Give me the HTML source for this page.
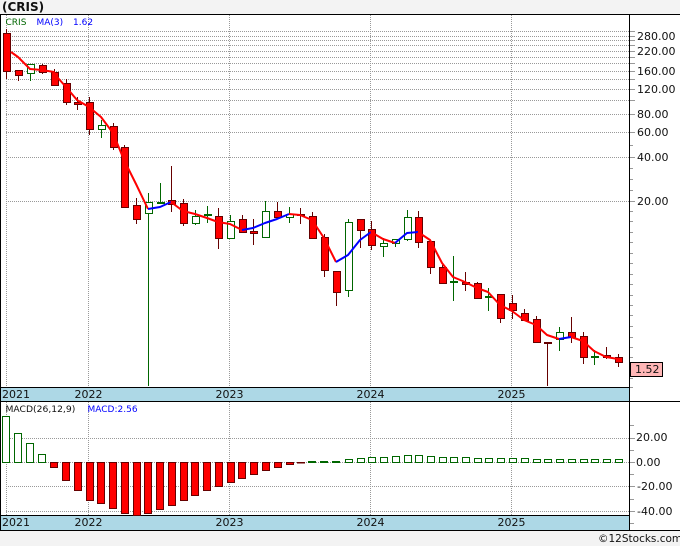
<!DOCTYPE html>
<html><head><meta charset="utf-8"><style>
html,body{margin:0;padding:0;background:#f3f3f3;width:680px;height:546px;overflow:hidden}
svg{display:block}
text{font-family:"DejaVu Sans",sans-serif;font-size:11px;fill:#111}
</style></head><body>
<svg width="680" height="546" viewBox="0 0 680 546" xmlns="http://www.w3.org/2000/svg" shape-rendering="crispEdges">
<rect width="680" height="546" fill="#f3f3f3"/>
<rect x="0" y="14" width="680" height="517" fill="#fff"/>
<g fill="none" stroke="#999" stroke-dasharray="1 1">
<path d="M6 31.5H630M6 36.5H630M6 40.5H630M6 45.5H630M6 51.5H630M6 57.5H630M6 63.5H630M6 71.5H630M6 79.5H630M6 89.5H630M6 100.5H630M6 114.5H630M6 132.5H630M6 157.5H630M6 201.5H630"/>
<path d="M6.5 15V387M88.5 15V387M229.5 15V387M370.5 15V387M511.5 15V387"/>
<path d="M6 438.5H630M6 462.5H630M6 486.5H630M6 511.5H630"/>
<path d="M6.5 402V515M88.5 402V515M229.5 402V515M370.5 402V515M511.5 402V515"/>
</g>
<path fill="none" stroke="#999" d="M630 31.5h5M630 36.5h5M630 40.5h5M630 45.5h5M630 51.5h5M630 57.5h5M630 63.5h5M630 71.5h5M630 79.5h5M630 89.5h5M630 100.5h5M630 114.5h5M630 132.5h5M630 145.5h3M630 157.5h5M630 168.5h3M630 179.5h3M630 190.5h3M630 201.5h5M630 211.5h3M630 221.5h3M630 232.5h3M630 242.5h3M630 253.5h3M630 263.5h3M630 274.5h3M630 284.5h3M630 295.5h3M630 305.5h3M630 315.5h3M630 326.5h3M630 337.5h3M630 347.5h3M630 357.5h3M630 368.5h3M630 378.5h3M630 387.5h3M630 425.5h4M630 438.5h5M630 450.5h4M630 462.5h5M630 474.5h4M630 486.5h5M630 499.5h4M630 511.5h5M630 523.5h4"/>
<!-- date bars -->
<rect x="1" y="388" width="628" height="13" fill="#add8e6"/>
<rect x="1" y="516" width="628" height="14" fill="#add8e6"/>
<path fill="none" stroke="#000" d="M0 14.5H680M0.5 14V531M629.5 14V531M0 387.5H630M0 401.5H680M0 515.5H630M0 530.5H680"/>
<!-- wicks -->
<path fill="none" stroke="#600" d="M6.5 29V79M18.5 70V81M42.5 64V74M54.5 69V85M66.5 79V105M77.5 97V110M89.5 97V135M113.5 123V150M124.5 145V207M136.5 198V224M171.5 166V212M183.5 199V226M218.5 208V249M242.5 215V233M253.5 219V245M277.5 202V217M300.5 208V224M312.5 212V239M324.5 234V277M336.5 271V306M360.5 219V248M371.5 221V250M418.5 211V248M430.5 241V274M442.5 265V284M465.5 272V291M477.5 282V299M500.5 294V323M512.5 295V319M524.5 309V321M536.5 316V342M547.5 342V386M571.5 317V343M583.5 332V364M606.5 347V359M618.5 354V367"/>
<path fill="none" stroke="#060" d="M30.5 64V81M101.5 120V138M148.5 193V386M160.5 183V204M195.5 210V225M207.5 206V223M230.5 215V238M265.5 201V238M289.5 207V223M348.5 219V297M383.5 238V257M395.5 239V247M407.5 210V241M453.5 256V301M488.5 288V311M559.5 327V351M594.5 350V365"/>
<!-- red bodies -->
<path fill="#f00" stroke="#600" d="M3.5 33.5h7v38h-7zM15.5 70.5h7v5h-7zM39.5 65.5h7v7h-7zM51.5 72.5h7v13h-7zM63.5 83.5h7v19h-7zM74.5 102.5h7v2h-7zM86.5 102.5h7v27h-7zM110.5 126.5h7v21h-7zM121.5 147.5h7v60h-7zM133.5 205.5h7v14h-7zM168.5 200.5h7v4h-7zM180.5 203.5h7v20h-7zM215.5 216.5h7v22h-7zM239.5 219.5h7v13h-7zM250.5 231.5h7v2h-7zM274.5 211.5h7v6h-7zM297.5 214.5h7v1h-7zM309.5 216.5h7v22h-7zM321.5 237.5h7v33h-7zM333.5 271.5h7v21h-7zM357.5 219.5h7v11h-7zM368.5 229.5h7v16h-7zM415.5 217.5h7v25h-7zM427.5 241.5h7v26h-7zM439.5 267.5h7v16h-7zM462.5 282.5h7v2h-7zM474.5 283.5h7v15h-7zM497.5 294.5h7v24h-7zM509.5 303.5h7v7h-7zM521.5 313.5h7v7h-7zM533.5 319.5h7v23h-7zM544.5 342.5h7v1h-7zM568.5 332.5h7v5h-7zM580.5 336.5h7v21h-7zM603.5 355.5h7v2h-7zM615.5 357.5h7v5h-7z"/>
<!-- green bodies -->
<path fill="#fff" stroke="#060" d="M27.5 64.5h7v9h-7zM98.5 125.5h7v4h-7zM145.5 202.5h7v11h-7zM157.5 202.5h7v1h-7zM192.5 216.5h7v7h-7zM204.5 214.5h7v1h-7zM227.5 221.5h7v17h-7zM262.5 211.5h7v26h-7zM286.5 214.5h7v3h-7zM345.5 222.5h7v68h-7zM380.5 243.5h7v3h-7zM392.5 239.5h7v4h-7zM404.5 217.5h7v22h-7zM450.5 281.5h7v1h-7zM485.5 296.5h7v1h-7zM556.5 332.5h7v7h-7zM591.5 356.5h7v1h-7z"/>
<!-- moving average -->
<g fill="none" stroke-width="2" stroke-linejoin="round" shape-rendering="auto">
<polyline stroke="#f00" points="11,52 18,57 30,69 42,70 54,72 58,78 66,87 77,100 89,107 101,117 113,133 124,160 136,184 148,209"/>
<polyline stroke="#00f" points="148,209 160,207 171,202"/>
<polyline stroke="#f00" points="171,202 183,211 195,214 207,218 218,222 230,224 242,230"/>
<polyline stroke="#00f" points="242,230 253,228 265,223 277,219 289,214"/>
<polyline stroke="#f00" points="289,214 300,215 312,220 324,238 336,262"/>
<polyline stroke="#00f" points="336,262 348,255 360,240 371,232"/>
<polyline stroke="#f00" points="371,232 383,239 395,243"/>
<polyline stroke="#00f" points="395,243 407,233 418,232"/>
<polyline stroke="#f00" points="418,232 430,240 442,263 453,277 465,282 477,288 488,292 500,305 512,311 524,320 536,325 547,335 559,339"/>
<polyline stroke="#00f" points="559,339 571,337"/>
<polyline stroke="#f00" points="571,337 583,341 594,351 606,357 618,359"/>
</g>
<!-- MACD bars -->
<path fill="#fff" stroke="#060" d="M2.5 416.5h7v46h-7zM14.5 433.5h7v29h-7zM26.5 443.5h7v19h-7zM38.5 454.5h7v8h-7zM345.5 459.5h7v3h-7zM357.5 458.5h7v4h-7zM368.5 457.5h7v5h-7zM380.5 457.5h7v5h-7zM392.5 456.5h7v6h-7zM404.5 455.5h7v7h-7zM415.5 455.5h7v7h-7zM427.5 456.5h7v6h-7zM439.5 457.5h7v5h-7zM450.5 457.5h7v5h-7zM462.5 457.5h7v5h-7zM474.5 458.5h7v4h-7zM485.5 458.5h7v4h-7zM497.5 458.5h7v4h-7zM509.5 458.5h7v4h-7zM521.5 458.5h7v4h-7zM533.5 459.5h7v3h-7zM544.5 459.5h7v3h-7zM556.5 459.5h7v3h-7zM568.5 459.5h7v3h-7zM580.5 459.5h7v3h-7zM591.5 459.5h7v3h-7zM603.5 459.5h7v3h-7zM615.5 459.5h7v3h-7z"/>
<path fill="#060" stroke="#060" d="M308.5 461.5h7v1h-7zM320.5 461.5h7v1h-7zM332.5 461.5h7v1h-7z"/>
<path fill="#f00" stroke="#600" d="M50.5 462.5h7v5h-7zM62.5 462.5h7v18h-7zM74.5 462.5h7v28h-7zM86.5 462.5h7v38h-7zM97.5 462.5h7v41h-7zM109.5 462.5h7v46h-7zM121.5 462.5h7v51h-7zM133.5 462.5h7v53h-7zM144.5 462.5h7v51h-7zM156.5 462.5h7v47h-7zM168.5 462.5h7v43h-7zM180.5 462.5h7v38h-7zM191.5 462.5h7v33h-7zM203.5 462.5h7v28h-7zM215.5 462.5h7v24h-7zM227.5 462.5h7v20h-7zM238.5 462.5h7v16h-7zM250.5 462.5h7v12h-7zM262.5 462.5h7v8h-7zM274.5 462.5h7v5h-7zM286.5 462.5h7v2h-7zM297.5 462.5h7v0.5h-7z"/>
<!-- price box -->
<rect x="630.5" y="362.5" width="32" height="14" fill="#ffb6b6" stroke="#000"/>
<!-- text -->
<text x="2" y="11" style="font-weight:bold;font-size:12px" fill="#111">(CRIS)</text>
<text x="5.5" y="25" style="font-size:9px;fill:#060">CRIS</text>
<text x="36.5" y="25" style="font-size:9px;fill:#00f">MA(3)</text>
<text x="73" y="25" style="font-size:9px;fill:#00f">1.62</text>
<text x="5.5" y="412" style="font-size:9.2px;fill:#111">MACD(26,12,9)</text>
<text x="87.5" y="412" style="font-size:9px;fill:#00f">MACD:2.56</text>
<text x="637" y="40">280.00</text>
<text x="637" y="55">220.00</text>
<text x="637" y="75">160.00</text>
<text x="637" y="93">120.00</text>
<text x="637" y="118">80.00</text>
<text x="637" y="136">60.00</text>
<text x="637" y="161">40.00</text>
<text x="637" y="205">20.00</text>
<text x="635" y="373">1.52</text>
<text x="636" y="441">20.00</text>
<text x="636" y="466">0.00</text>
<text x="637" y="490" text-anchor="start">-20.00</text>
<text x="637" y="515">-40.00</text>
<text x="2" y="398">2021</text>
<text x="74.5" y="398">2022</text>
<text x="215.5" y="398">2023</text>
<text x="356.5" y="398">2024</text>
<text x="497.5" y="398">2025</text>
<text x="2" y="526">2021</text>
<text x="74.5" y="526">2022</text>
<text x="215.5" y="526">2023</text>
<text x="356.5" y="526">2024</text>
<text x="497.5" y="526">2025</text>
<text x="598" y="542" style="font-size:10.5px">©12Stocks.com</text>
</svg>
</body></html>
